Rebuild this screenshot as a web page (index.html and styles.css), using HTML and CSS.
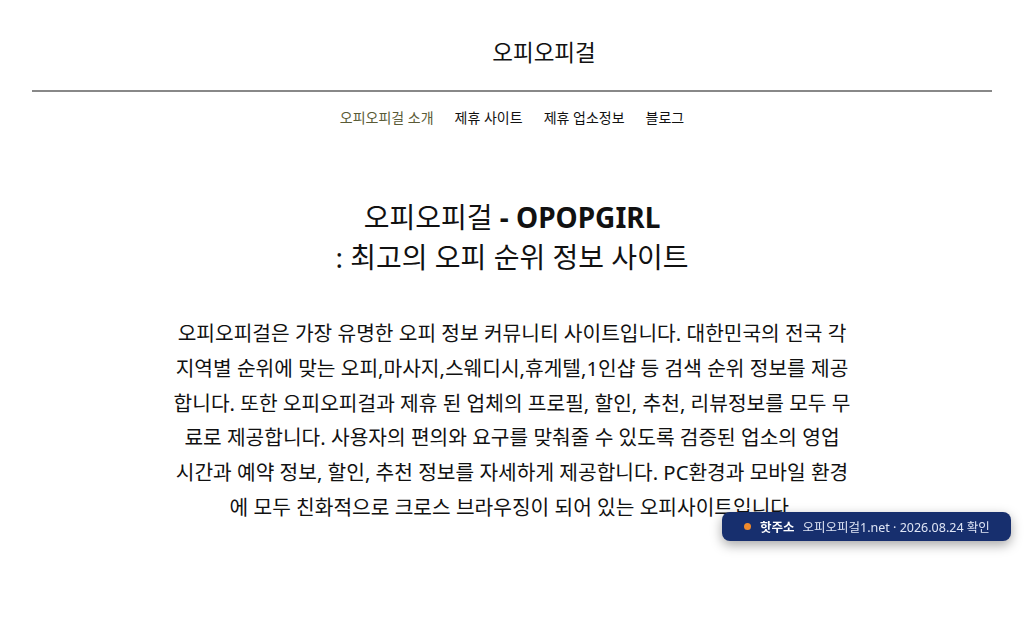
FILE: index.html
```html
<!DOCTYPE html>
<html lang="ko">
<head>
<meta charset="utf-8">
<title>오피오피걸</title>
<link rel="stylesheet" href="styles.css">
</head>
<body>
<header class="site-header">
  <div class="site-title">오피오피걸</div>
  <hr class="divider">
  <nav class="nav">
    <a class="nav-item active">오피오피걸 소개</a>
    <a class="nav-item">제휴 사이트</a>
    <a class="nav-item">제휴 업소정보</a>
    <a class="nav-item">블로그</a>
  </nav>
</header>
<main class="content">
  <h1 class="headline">오피오피걸 <b>- OPOPGIRL</b><br>: 최고의 오피 순위 정보 사이트</h1>
  <p class="intro">오피오피걸은 가장 유명한 오피 정보 커뮤니티 사이트입니다. 대한민국의 전국 각<br>지역별 순위에 맞는 오피,마사지,스웨디시,휴게텔,1인샵 등 검색 순위 정보를 제공<br>합니다. 또한 오피오피걸과 제휴 된 업체의 프로필, 할인, 추천, 리뷰정보를 모두 무<br>료로 제공합니다. 사용자의 편의와 요구를 맞춰줄 수 있도록 검증된 업소의 영업<br>시간과 예약 정보, 할인, 추천 정보를 자세하게 제공합니다. PC환경과 모바일 환경<br>에 모두 친화적으로 크로스 브라우징이 되어 있는 오피사이트입니다.</p>
</main>
<div class="toast">
  <span class="dot"></span>
  <strong class="toast-label">핫주소</strong>
  <span class="toast-text">오피오피걸1.net · 2026.08.24 확인</span>
</div>
</body>
</html>
```
FILE: styles.css
```css
html, body {
  margin: 0;
  padding: 0;
  background: #ffffff;
}
body {
  font-family: "Noto Sans", "Noto Sans CJK KR", sans-serif;
  color: #111;
}
.site-header {
  display: flex;
  flex-direction: column;
  align-items: center;
  padding-top: 37px;
}
.site-title {
  font-size: 22.5px;
  line-height: 32px;
  padding-left: 64px;
  color: #111;
}
.divider {
  align-self: stretch;
  margin: 21px 32px 0;
  border: none;
  height: 2px;
  background: #888;
}
.nav {
  display: flex;
  gap: 21px;
  margin-top: 16px;
  font-size: 14px;
  line-height: 20px;
}
.nav-item {
  color: #111;
  text-decoration: none;
}
.nav-item.active {
  color: #5a5b36;
}
.content {
  display: flex;
  flex-direction: column;
  align-items: center;
  padding-top: 69px;
}
.headline {
  margin: 0;
  font-size: 28px;
  line-height: 40px;
  font-weight: 400;
  text-align: center;
}
.headline b {
  font-weight: 700;
}
.intro {
  margin: 39px 0 0;
  width: 740px;
  font-size: 20.3px;
  line-height: 34.8px;
  text-align: center;
  color: #111;
}
.toast {
  position: fixed;
  left: 722px;
  top: 512px;
  width: 289px;
  height: 29px;
  box-sizing: border-box;
  padding: 0 0 0 22px;
  display: flex;
  align-items: center;
  background: #172f6e;
  border-radius: 8px;
  box-shadow: 0 4px 12px rgba(0,0,0,0.35);
  font-size: 12.5px;
  color: #fff;
  white-space: nowrap;
}
.dot {
  width: 7px;
  height: 7px;
  border-radius: 50%;
  background: #f08a2c;
  margin-right: 9px;
}
.toast-label {
  font-weight: 700;
  margin-right: 8px;
}
.toast-text {
  color: #dfe5f5;
}
```
